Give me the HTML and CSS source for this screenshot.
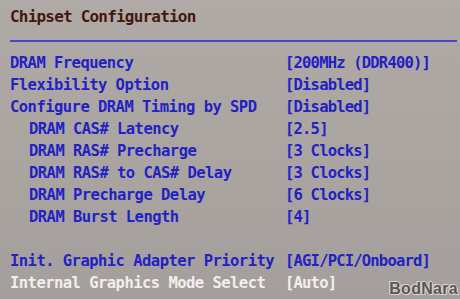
FILE: index.html
```html
<!DOCTYPE html>
<html>
<head>
<meta charset="utf-8">
<link rel="stylesheet" href="styles.css">
</head>
<body>
<div class="screen">
  <div class="title">Chipset Configuration</div>
  <div class="rule"></div>
  <div class="rows">
    <div class="label">DRAM Frequency</div><div class="value">[200MHz (DDR400)]</div>
    <div class="label">Flexibility Option</div><div class="value">[Disabled]</div>
    <div class="label">Configure DRAM Timing by SPD</div><div class="value">[Disabled]</div>
    <div class="label sub">DRAM CAS# Latency</div><div class="value">[2.5]</div>
    <div class="label sub">DRAM RAS# Precharge</div><div class="value">[3 Clocks]</div>
    <div class="label sub">DRAM RAS# to CAS# Delay</div><div class="value">[3 Clocks]</div>
    <div class="label sub">DRAM Precharge Delay</div><div class="value">[6 Clocks]</div>
    <div class="label sub">DRAM Burst Length</div><div class="value">[4]</div>
    <div class="blank"></div>
    <div class="label">Init. Graphic Adapter Priority</div><div class="value">[AGI/PCI/Onboard]</div>
    <div class="label sel">Internal Graphics Mode Select</div><div class="value sel">[Auto]</div>
  </div>
  <div class="mark">BodNara</div>
</div>
</body>
</html>
```
FILE: styles.css
```css
html, body {
  margin: 0;
  padding: 0;
}
body {
  width: 460px;
  height: 299px;
  overflow: hidden;
  background: #aba5a2;
}
.screen {
  position: relative;
  width: 460px;
  height: 299px;
  box-sizing: border-box;
  padding: 6px 3px 0 10px;
  background: linear-gradient(180deg, #b0aaa7 0%, #aaa4a1 60%, #a49f9c 100%);
  font-family: "DejaVu Sans Mono", monospace;
  font-weight: bold;
  font-size: 15.5px;
  letter-spacing: -0.53px;
  line-height: 22px;
}
.title {
  color: #45180f;
  height: 22px;
  font-size: 16px;
  letter-spacing: -0.8px;
}
.rule {
  margin-top: 12px;
  height: 2px;
  background: #4646c8;
}
.rows {
  margin-top: 10px;
  display: grid;
  grid-template-columns: 275px 1fr;
  grid-auto-rows: 22px;
  color: #2222c2;
}
.label {
  white-space: nowrap;
}
.sub {
  padding-left: 19px;
}
.value {
  white-space: nowrap;
  letter-spacing: -0.8px;
}
.blank {
  grid-column: 1 / 3;
}
.sel {
  color: #f2efec;
}
.mark {
  position: absolute;
  right: 2px;
  bottom: 2px;
  font-family: "Liberation Sans", Arial, sans-serif;
  font-weight: bold;
  font-size: 16px;
  line-height: 16px;
  letter-spacing: 0.3px;
  color: #5b5652;
  text-shadow: 1px 0 #d8d4d0, -1px 0 #d8d4d0, 0 1px #d8d4d0, 0 -1px #d8d4d0, 1px 1px #d8d4d0, -1px -1px #d8d4d0;
}
```
